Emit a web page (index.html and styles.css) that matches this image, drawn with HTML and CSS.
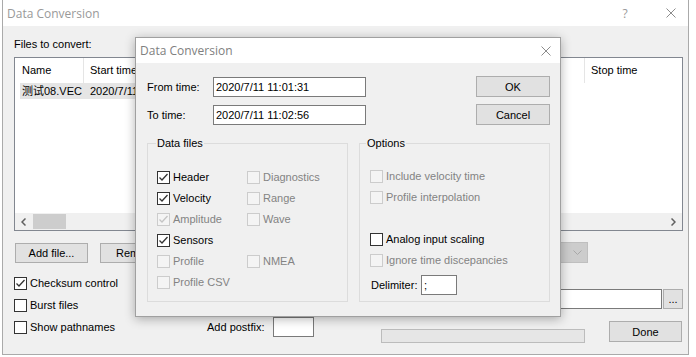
FILE: index.html
```html
<!DOCTYPE html>
<html lang="en">
<head>
    <meta charset="UTF-8">
    <meta name="viewport" content="width=device-width, initial-scale=1.0">
    <title>Data Conversion</title>
    <link rel="stylesheet" href="styles.css">
</head>
<body>
    <div class="window main-window">
        <div class="titlebar">
            <span class="title">Data Conversion</span>
            <span class="caption-help">?</span>
            <span class="caption-close">
                <svg width="10" height="10" viewBox="0 0 10 10"><path d="M0.5 0.5 L9.5 9.5 M9.5 0.5 L0.5 9.5"/></svg>
            </span>
        </div>
        <div class="window-body">
            <div class="files-label">Files to convert:</div>
            <div class="list">
                <div class="list-head">
                    <div class="col col-name">Name</div>
                    <div class="col col-start">Start time</div>
                    <div class="col col-stop">Stop time</div>
                </div>
                <div class="list-rows">
                    <div class="list-row selected">
                        <span class="cell cell-name">测试08.VEC</span>
                        <span class="cell cell-start">2020/7/11</span>
                    </div>
                </div>
                <div class="hscroll">
                    <span class="arrow">
                        <svg width="5" height="8" viewBox="0 0 5 8"><polyline points="4.5,0.5 1,4 4.5,7.5"/></svg>
                    </span>
                    <span class="thumb"></span>
                    <span class="arrow arrow-right">
                        <svg width="5" height="8" viewBox="0 0 5 8"><polyline points="0.5,0.5 4,4 0.5,7.5"/></svg>
                    </span>
                </div>
            </div>

            <div class="button-row">
                <button class="btn">Add file...</button>
                <button class="btn">Remove</button>
                <div class="combo">
                    <svg width="9" height="5" viewBox="0 0 9 5"><polyline points="0.5,0.5 4.5,4.5 8.5,0.5"/></svg>
                </div>
            </div>

            <div class="bottom">
                <div class="flags">
                    <label class="check"><span class="box checked"><svg viewBox="0 0 11 11"><polyline points="1.5,5.5 4,8 9.5,2"/></svg></span>Checksum control</label>
                    <label class="check"><span class="box"></span>Burst files</label>
                    <label class="check"><span class="box"></span>Show pathnames</label>
                </div>
                <div class="postfix">
                    <div class="postfix-row">
                        <span class="postfix-label">Add postfix:</span>
                        <input class="field postfix-input" type="text" value="">
                    </div>
                </div>
                <div class="output">
                    <div class="path-row">
                        <input class="field path-input" type="text" value="">
                        <button class="btn dots">...</button>
                    </div>
                    <div class="run-row">
                        <div class="progress"></div>
                        <button class="btn done">Done</button>
                    </div>
                </div>
            </div>
        </div>
    </div>

    <div class="window dialog">
        <div class="titlebar">
            <span class="title">Data Conversion</span>
            <span class="caption-close dlg-close">
                <svg width="10" height="10" viewBox="0 0 10 10"><path d="M0.5 0.5 L9.5 9.5 M9.5 0.5 L0.5 9.5"/></svg>
            </span>
        </div>
        <div class="dlg-body">
            <div class="time-block">
                <div class="time-fields">
                    <div class="field-row">
                        <span class="field-label">From time:</span>
                        <input class="field time-input" type="text" value="2020/7/11 11:01:31">
                    </div>
                    <div class="field-row">
                        <span class="field-label">To time:</span>
                        <input class="field time-input" type="text" value="2020/7/11 11:02:56">
                    </div>
                </div>
                <div class="dlg-buttons">
                    <button class="btn">OK</button>
                    <button class="btn">Cancel</button>
                </div>
            </div>

            <div class="groups">
                <fieldset class="group data-group">
                    <legend>Data files</legend>
                    <div class="data-grid">
                        <label class="check"><span class="box checked"><svg viewBox="0 0 11 11"><polyline points="1.5,5.5 4,8 9.5,2"/></svg></span>Header</label>
                        <label class="check disabled"><span class="box"></span>Diagnostics</label>
                        <label class="check"><span class="box checked"><svg viewBox="0 0 11 11"><polyline points="1.5,5.5 4,8 9.5,2"/></svg></span>Velocity</label>
                        <label class="check disabled"><span class="box"></span>Range</label>
                        <label class="check disabled"><span class="box checked"><svg viewBox="0 0 11 11"><polyline points="1.5,5.5 4,8 9.5,2"/></svg></span>Amplitude</label>
                        <label class="check disabled"><span class="box"></span>Wave</label>
                        <label class="check"><span class="box checked"><svg viewBox="0 0 11 11"><polyline points="1.5,5.5 4,8 9.5,2"/></svg></span>Sensors</label>
                        <span class="blank"></span>
                        <label class="check disabled"><span class="box"></span>Profile</label>
                        <label class="check disabled"><span class="box"></span>NMEA</label>
                        <label class="check disabled"><span class="box"></span>Profile CSV</label>
                    </div>
                </fieldset>

                <fieldset class="group options-group">
                    <legend>Options</legend>
                    <div class="options-list">
                        <label class="check disabled"><span class="box"></span>Include velocity time</label>
                        <label class="check disabled"><span class="box"></span>Profile interpolation</label>
                        <span class="blank"></span>
                        <label class="check"><span class="box"></span>Analog input scaling</label>
                        <label class="check disabled"><span class="box"></span>Ignore time discepancies</label>
                        <div class="delimiter-row">
                            <span class="delimiter-label">Delimiter:</span>
                            <input class="field delimiter-input" type="text" value=";">
                        </div>
                    </div>
                </fieldset>
            </div>
        </div>
    </div>
</body>
</html>
```

FILE: styles.css
```css
body {
    margin: 0;
    width: 696px;
    height: 357px;
    overflow: hidden;
    position: relative;
    background: #ffffff;
    font-family: "Liberation Sans", "Noto Sans CJK SC", Arial, sans-serif;
    font-size: 11px;
    color: #000000;
}

/* windows */
.window {
    position: absolute;
    box-sizing: border-box;
    display: flex;
    flex-direction: column;
    background: #f0f0f0;
    border: 1px solid #aaaaaa;
}
.main-window {
    left: 2px;
    top: -1px;
    width: 687px;
    height: 356px;
}
.dialog {
    left: 135px;
    top: 37px;
    width: 426px;
    height: 280px;
    border-color: #a0a0a0;
    box-shadow: 0 2px 10px rgba(0, 0, 0, 0.3);
}
.titlebar {
    flex: none;
    display: flex;
    align-items: center;
    height: 25px;
    padding-left: 4px;
    background: #ffffff;
}
.main-window .titlebar {
    height: 26px;
}
.title {
    font-family: "Open Sans", "Noto Sans", sans-serif;
    font-size: 12px;
    color: #999999;
}
.dialog .title {
    color: #808080;
}
.caption-help {
    margin-left: auto;
    width: 10px;
    text-align: center;
    font-family: "Open Sans", sans-serif;
    font-size: 12px;
    color: #999999;
}
.caption-close {
    display: flex;
    width: 10px;
    margin-left: 36px;
    margin-right: 12px;
}
.caption-close svg path {
    stroke: #8c8c8c;
    stroke-width: 1;
    fill: none;
}
.dlg-close {
    margin-left: auto;
    margin-right: 9px;
}

/* main window body */
.window-body {
    flex: 1;
    display: flex;
    flex-direction: column;
    padding: 11px 5px 0 11px;
}
.files-label {
    line-height: 14px;
}
.list {
    margin-top: 6px;
    height: 174px;
    box-sizing: border-box;
    display: flex;
    flex-direction: column;
    background: #ffffff;
    border: 1px solid #828790;
}
.list-head {
    display: grid;
    grid-template-columns: 69px 501px 1fr;
    height: 25px;
    line-height: 25px;
}
.col {
    padding-left: 6px;
    border-right: 1px solid #e5e5e5;
    white-space: nowrap;
}
.col-name {
    padding-left: 7px;
}
.col-stop {
    border-right: none;
}
.list-rows {
    flex: 1;
}
.list-row {
    display: grid;
    grid-template-columns: 64px 1fr;
    width: 380px;
    margin-left: 5px;
    height: 16px;
    line-height: 16px;
}
.list-row.selected {
    background: #e5e5e5;
}
.cell {
    white-space: nowrap;
}
.cell-name {
    padding-left: 2px;
}
.cell-start {
    padding-left: 6px;
}
.hscroll {
    display: flex;
    height: 17px;
    background: #f0f0f0;
}
.arrow {
    width: 17px;
    display: flex;
    align-items: center;
    justify-content: center;
}
.arrow svg polyline {
    fill: none;
    stroke: #606060;
    stroke-width: 1.5;
}
.arrow-right {
    margin-left: auto;
}
.thumb {
    width: 33px;
    margin: 1px 0 1px 1px;
    background: #cdcdcd;
}

/* controls */
.btn {
    box-sizing: border-box;
    width: 73px;
    height: 20px;
    padding: 0;
    font: inherit;
    color: #000000;
    background: #e1e1e1;
    border: 1px solid #adadad;
}
.field {
    box-sizing: border-box;
    height: 20px;
    padding: 0 2px;
    font: inherit;
    color: #000000;
    background: #ffffff;
    border: 1px solid #7a7a7a;
    outline: none;
}
.button-row {
    display: flex;
    gap: 12px;
    margin-top: 12px;
    padding-left: 1px;
    height: 20px;
}
.combo {
    box-sizing: border-box;
    display: flex;
    align-items: center;
    justify-content: flex-end;
    width: 206px;
    height: 21px;
    margin-top: -1px;
    margin-left: auto;
    margin-right: 95px;
    padding-right: 5px;
    background: #cccccc;
    border: 1px solid #bfbfbf;
}
.combo svg polyline {
    fill: none;
    stroke: #a8a8a8;
    stroke-width: 1;
}

.bottom {
    display: grid;
    grid-template-columns: 193px 174px 1fr;
}
.flags {
    display: flex;
    flex-direction: column;
    gap: 9px;
    padding-top: 14px;
}
.check {
    display: flex;
    align-items: center;
    gap: 3px;
    height: 13px;
    line-height: 13px;
    white-space: nowrap;
}
.box {
    flex: none;
    box-sizing: border-box;
    width: 13px;
    height: 13px;
    display: flex;
    background: #ffffff;
    border: 1px solid #333333;
}
.box svg {
    width: 11px;
    height: 11px;
}
.box svg polyline {
    fill: none;
    stroke: #333333;
    stroke-width: 1.3;
}
.check.disabled {
    color: #838383;
}
.check.disabled .box {
    background: #f4f4f4;
    border-color: #cccccc;
}
.check.disabled .box svg polyline {
    stroke: #c4c4c4;
}
.blank {
    height: 13px;
}

.postfix {
    padding-top: 54px;
}
.postfix-row {
    display: flex;
    align-items: center;
}
.postfix-label {
    width: 66px;
}
.postfix-input {
    width: 41px;
}
.output {
    padding-top: 26px;
}
.path-row {
    display: flex;
    gap: 1px;
}
.path-input {
    flex: 1;
}
.dots {
    width: 20px;
    line-height: 12px;
}
.run-row {
    display: flex;
    margin-top: 12px;
}
.progress {
    box-sizing: border-box;
    width: 204px;
    height: 14px;
    margin-top: 8px;
    background: #e6e6e6;
    border: 1px solid #bcbcbc;
}
.done {
    height: 21px;
    margin-left: auto;
    margin-right: 1px;
}

/* dialog body */
.dlg-body {
    flex: 1;
    padding: 13px 10px 0 11px;
}
.time-block {
    display: flex;
}
.time-fields {
    display: flex;
    flex-direction: column;
    gap: 8px;
    margin-top: 1px;
}
.field-row {
    display: flex;
    align-items: center;
    height: 20px;
}
.field-label {
    width: 66px;
}
.time-input {
    width: 153px;
}
.dlg-buttons {
    display: flex;
    flex-direction: column;
    gap: 7px;
    margin-left: auto;
}
.dlg-buttons .btn {
    width: 74px;
    height: 21px;
}
.groups {
    display: flex;
    gap: 11px;
    margin-top: 11px;
}
.group {
    box-sizing: border-box;
    height: 166px;
    margin: 0;
    min-width: 0;
    padding: 20px 0 0 9px;
    border: 1px solid #dcdcdc;
}
.group legend {
    padding: 0 1px;
    margin-left: -1px;
    line-height: 14px;
}
.data-group {
    width: 201px;
}
.options-group {
    width: 191px;
    padding-left: 10px;
}
.options-group legend {
    margin-left: -4px;
}
.data-grid {
    display: grid;
    grid-template-columns: 90px 1fr;
    grid-auto-rows: 13px;
    row-gap: 8px;
    margin-top: 1px;
}
.options-list {
    display: flex;
    flex-direction: column;
    gap: 8px;
}
.delimiter-row {
    display: flex;
    align-items: center;
    height: 20px;
}
.delimiter-label {
    width: 50px;
    margin-left: 1px;
}
.delimiter-input {
    width: 36px;
}
```
